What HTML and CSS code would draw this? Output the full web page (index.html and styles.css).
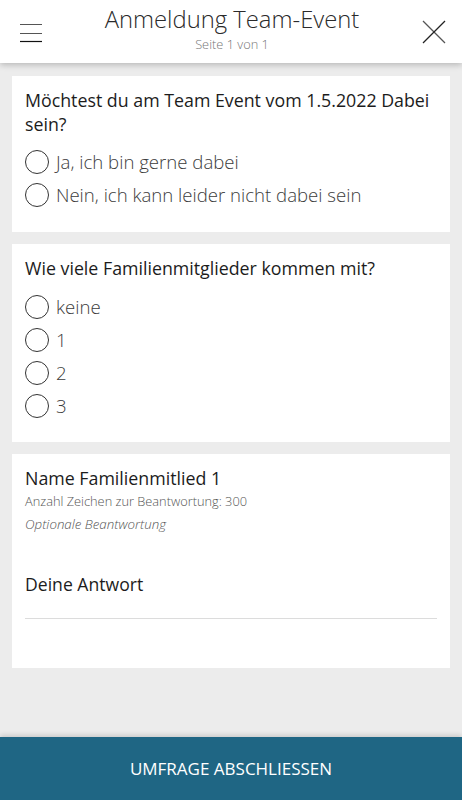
FILE: index.html
```html
<!DOCTYPE html>
<html lang="de">
<head>
    <meta charset="UTF-8">
    <meta name="viewport" content="width=device-width, initial-scale=1.0">
    <title>Anmeldung Team-Event</title>
    <link rel="stylesheet" href="styles.css">
</head>
<body>

<!-- Kopfzeile -->
<header class="topbar">
    <button class="icon-btn menu-btn" aria-label="Menü">
        <svg width="22" height="20" viewBox="0 0 22 20">
            <line x1="0" y1="1.5" x2="22" y2="1.5" stroke="#555" stroke-width="1"/>
            <line x1="0" y1="10.5" x2="22" y2="10.5" stroke="#555" stroke-width="1"/>
            <line x1="0" y1="18.5" x2="22" y2="18.5" stroke="#111" stroke-width="1.2"/>
        </svg>
    </button>
    <div class="title-box">
        <h1 class="title">Anmeldung Team-Event</h1>
        <div class="subtitle">Seite 1 von 1</div>
    </div>
    <button class="icon-btn close-btn" aria-label="Schließen">
        <svg width="24" height="24" viewBox="0 0 24 24">
            <line x1="1" y1="1" x2="23" y2="23" stroke="#555" stroke-width="1.2"/>
            <line x1="23" y1="1" x2="1" y2="23" stroke="#222" stroke-width="1.2"/>
        </svg>
    </button>
</header>

<!-- Fragen -->
<main class="content">
    <section class="card">
        <h2 class="question">Möchtest du am Team Event vom 1.5.2022 Dabei sein?</h2>
        <label class="option"><span class="radio"></span>Ja, ich bin gerne dabei</label>
        <label class="option"><span class="radio"></span>Nein, ich kann leider nicht dabei sein</label>
    </section>

    <section class="card card-count">
        <h2 class="question">Wie viele Familienmitglieder kommen mit?</h2>
        <label class="option"><span class="radio"></span>keine</label>
        <label class="option"><span class="radio"></span>1</label>
        <label class="option"><span class="radio"></span>2</label>
        <label class="option"><span class="radio"></span>3</label>
    </section>

    <section class="card card-text">
        <h2 class="question">Name Familienmitlied 1</h2>
        <div class="hint">Anzahl Zeichen zur Beantwortung: 300</div>
        <div class="hint optional">Optionale Beantwortung</div>
        <div class="answer">Deine Antwort</div>
    </section>
</main>

<!-- Abschließen -->
<button class="submit-btn" type="button">UMFRAGE ABSCHLIESSEN</button>

</body>
</html>
```

FILE: styles.css
```css
html, body {
    height: 100%;
}
body {
    font-family: "Open Sans", "Liberation Sans", sans-serif;
    background-color: #ececec;
    margin: 0;
    padding: 0;
    display: flex;
    flex-direction: column;
    color: #1c1c1c;
}
.topbar {
    height: 63px;
    flex-shrink: 0;
    background-color: #fff;
    display: flex;
    align-items: center;
    justify-content: space-between;
    padding: 0 16px 0 20px;
    box-sizing: border-box;
    box-shadow: 0 2px 6px rgba(0, 0, 0, 0.22);
    position: relative;
    z-index: 1;
}
.icon-btn {
    background: none;
    border: none;
    padding: 0;
    display: flex;
    cursor: pointer;
}
.menu-btn {
    margin-top: 2px;
}
.close-btn {
    margin-top: 1px;
}
.title-box {
    align-self: flex-start;
    padding-top: 7px;
    text-align: center;
}
.title {
    font-size: 23.8px;
    font-weight: 300;
    margin: 0;
    line-height: 24px;
    color: #2a2a2a;
}
.subtitle {
    font-size: 12.8px;
    font-weight: 300;
    color: #777;
    line-height: 16px;
    margin-top: 5px;
}
.content {
    flex: 1;
    padding: 13px 12px;
    display: flex;
    flex-direction: column;
    gap: 12px;
}
.card {
    background-color: #fff;
    padding: 12px 13px 21px;
}
.question {
    font-size: 17.8px;
    font-weight: 400;
    line-height: 24px;
    margin: 0 0 9px;
    color: #1c1c1c;
}
.option {
    display: flex;
    align-items: center;
    height: 33px;
    font-size: 18.6px;
    font-weight: 300;
    color: #3c3c3c;
}
.radio {
    width: 22px;
    height: 22px;
    border: 1.3px solid #333;
    border-radius: 50%;
    margin-right: 7px;
    flex-shrink: 0;
}
.card-count {
    padding-bottom: 20px;
}
.card-count .question {
    margin-bottom: 10px;
}
.card-text {
    padding-bottom: 49px;
}
.card-text .question {
    margin-bottom: 0;
}
.hint {
    font-size: 12.8px;
    font-weight: 300;
    color: #555;
    line-height: 23px;
}
.optional {
    font-size: 13.3px;
    font-style: italic;
}
.answer {
    font-size: 17.6px;
    color: #1c1c1c;
    margin-top: 36px;
    padding-bottom: 22px;
    border-bottom: 1px solid #dcdcdc;
}
.submit-btn {
    flex-shrink: 0;
    height: 63px;
    width: 100%;
    border: none;
    background-color: #1f6684;
    color: #fff;
    font-family: inherit;
    font-size: 17px;
    cursor: pointer;
    box-shadow: 0 -2px 5px rgba(0, 0, 0, 0.15);
}
```
